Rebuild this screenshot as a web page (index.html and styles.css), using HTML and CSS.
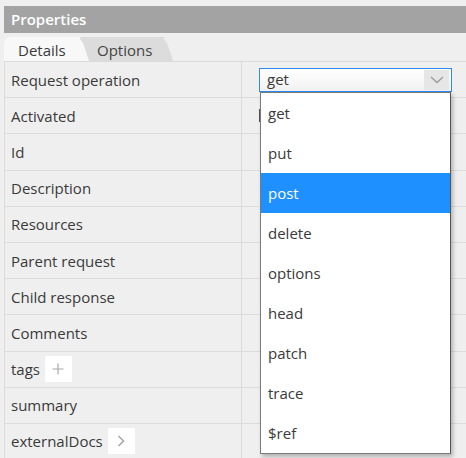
FILE: index.html
```html
<!DOCTYPE html>
<html>
<head>
<meta charset="utf-8">
<link rel="stylesheet" href="styles.css">
</head>
<body>
<div class="panel">
  <div class="header">Properties</div>
  <div class="tabs">
    <div class="tab tab-active">Details</div>
    <div class="tab tab-inactive">Options</div>
  </div>
  <div class="grid">
    <div class="row">
      <div class="label">Request operation</div>
      <div class="value">
        <div class="select">
          <span class="select-text">get</span>
          <span class="select-btn">
            <svg width="14" height="8" viewBox="0 0 14 8"><polyline points="1,1 7,6.5 13,1" fill="none" stroke="#9a9a9a" stroke-width="1.3"/></svg>
          </span>
          <ul class="dropdown">
            <li>get</li>
            <li>put</li>
            <li class="selected">post</li>
            <li>delete</li>
            <li>options</li>
            <li>head</li>
            <li>patch</li>
            <li>trace</li>
            <li>$ref</li>
          </ul>
        </div>
      </div>
    </div>
    <div class="row">
      <div class="label">Activated</div>
      <div class="value"><span class="checkbox"></span></div>
    </div>
    <div class="row"><div class="label">Id</div><div class="value"></div></div>
    <div class="row"><div class="label">Description</div><div class="value"></div></div>
    <div class="row"><div class="label">Resources</div><div class="value"></div></div>
    <div class="row"><div class="label">Parent request</div><div class="value"></div></div>
    <div class="row"><div class="label">Child response</div><div class="value"></div></div>
    <div class="row"><div class="label">Comments</div><div class="value"></div></div>
    <div class="row">
      <div class="label"><span>tags</span><span class="mini-btn"><svg width="12" height="12" viewBox="0 0 12 12"><path d="M6 0.5V11.5M0.5 6H11.5" stroke="#a8a8a8" stroke-width="1.2" fill="none"/></svg></span></div>
      <div class="value"></div>
    </div>
    <div class="row"><div class="label">summary</div><div class="value"></div></div>
    <div class="row">
      <div class="label"><span>externalDocs</span><span class="mini-btn"><svg width="8" height="12" viewBox="0 0 8 12"><polyline points="1.5,1 6.5,6 1.5,11" fill="none" stroke="#a8a8a8" stroke-width="1.6"/></svg></span></div>
      <div class="value"></div>
    </div>
  </div>
</div>
</body>
</html>
```
FILE: styles.css
```css
* { box-sizing: border-box; }
html, body {
  margin: 0;
  padding: 0;
  background: #efefef;
  font-family: "Open Sans", "Liberation Sans", sans-serif;
  color: #3a3a3a;
  overflow: hidden;
}
.panel {
  padding: 6px 0 0 4px;
}
.header {
  height: 27px;
  background: #a3a3a3;
  color: #ffffff;
  font-size: 15px;
  font-weight: 600;
  line-height: 27px;
  padding-left: 7px;
}
.tabs {
  display: flex;
  height: 24px;
  margin-top: 4px;
  border-bottom: 1px solid #dadada;
  box-sizing: content-box;
}
.tab {
  position: relative;
  height: 24px;
  font-size: 15px;
  line-height: 26px;
  border-top-left-radius: 7px;
}
.tab::after {
  content: "";
  position: absolute;
  top: 0;
  bottom: 0;
  right: -9px;
  width: 18px;
  background: inherit;
  border-top-right-radius: 7px;
  transform: skewX(18deg);
  transform-origin: bottom left;
  z-index: -1;
}
.tab-active {
  width: 76px;
  padding-left: 14px;
  background: #f8f8f8;
  color: #3a3a3a;
  z-index: 3;
}
.tab-inactive {
  width: 88px;
  margin-left: -4px;
  padding-left: 21px;
  background: #dcdcdc;
  color: #444;
  z-index: 1;
}
.grid {
  border-left: 1px solid #dcdcdc;
}
.row {
  display: grid;
  grid-template-columns: 237px 1fr;
  height: 36.2px;
  border-bottom: 1px solid #dcdcdc;
}
.label {
  display: flex;
  align-items: center;
  padding-left: 6px;
  font-size: 15px;
  border-right: 1px solid #dcdcdc;
  white-space: nowrap;
}
.value {
  display: flex;
  align-items: center;
  padding-left: 17px;
  position: relative;
}
.select {
  position: relative;
  width: 193px;
  height: 24px;
  border: 1px solid #2a8bf2;
  background: linear-gradient(#ffffff, #f1f1f1);
  display: flex;
  align-items: center;
  justify-content: space-between;
  padding: 0 2px 0 7px;
  z-index: 5;
}
.select-text {
  font-size: 15px;
  color: #3a3a3a;
  line-height: 20px;
  margin-top: -2px;
}
.select-btn {
  width: 25px;
  height: 20px;
  background: #e6e6e6;
  display: flex;
  align-items: center;
  justify-content: center;
}
.dropdown {
  position: absolute;
  left: 0;
  top: 23px;
  width: 191px;
  margin: 0;
  padding: 0;
  list-style: none;
  background: #ffffff;
  border: 1px solid #7a7a7a;
  border-right-color: #555;
  box-shadow: 2px 3px 4px rgba(0,0,0,0.25);
  z-index: 10;
}
.dropdown li {
  height: 40px;
  line-height: 40px;
  padding-left: 7px;
  font-size: 15px;
  color: #3a3a3a;
}
.dropdown li.selected {
  background: #1e90ff;
  color: #ffffff;
}
.checkbox {
  width: 13px;
  height: 13px;
  border: 1px solid #555;
  background: #fff;
}
.mini-btn {
  display: inline-flex;
  align-items: center;
  justify-content: center;
  width: 27px;
  height: 26px;
  background: #ffffff;
  margin-left: 5px;
}
```
